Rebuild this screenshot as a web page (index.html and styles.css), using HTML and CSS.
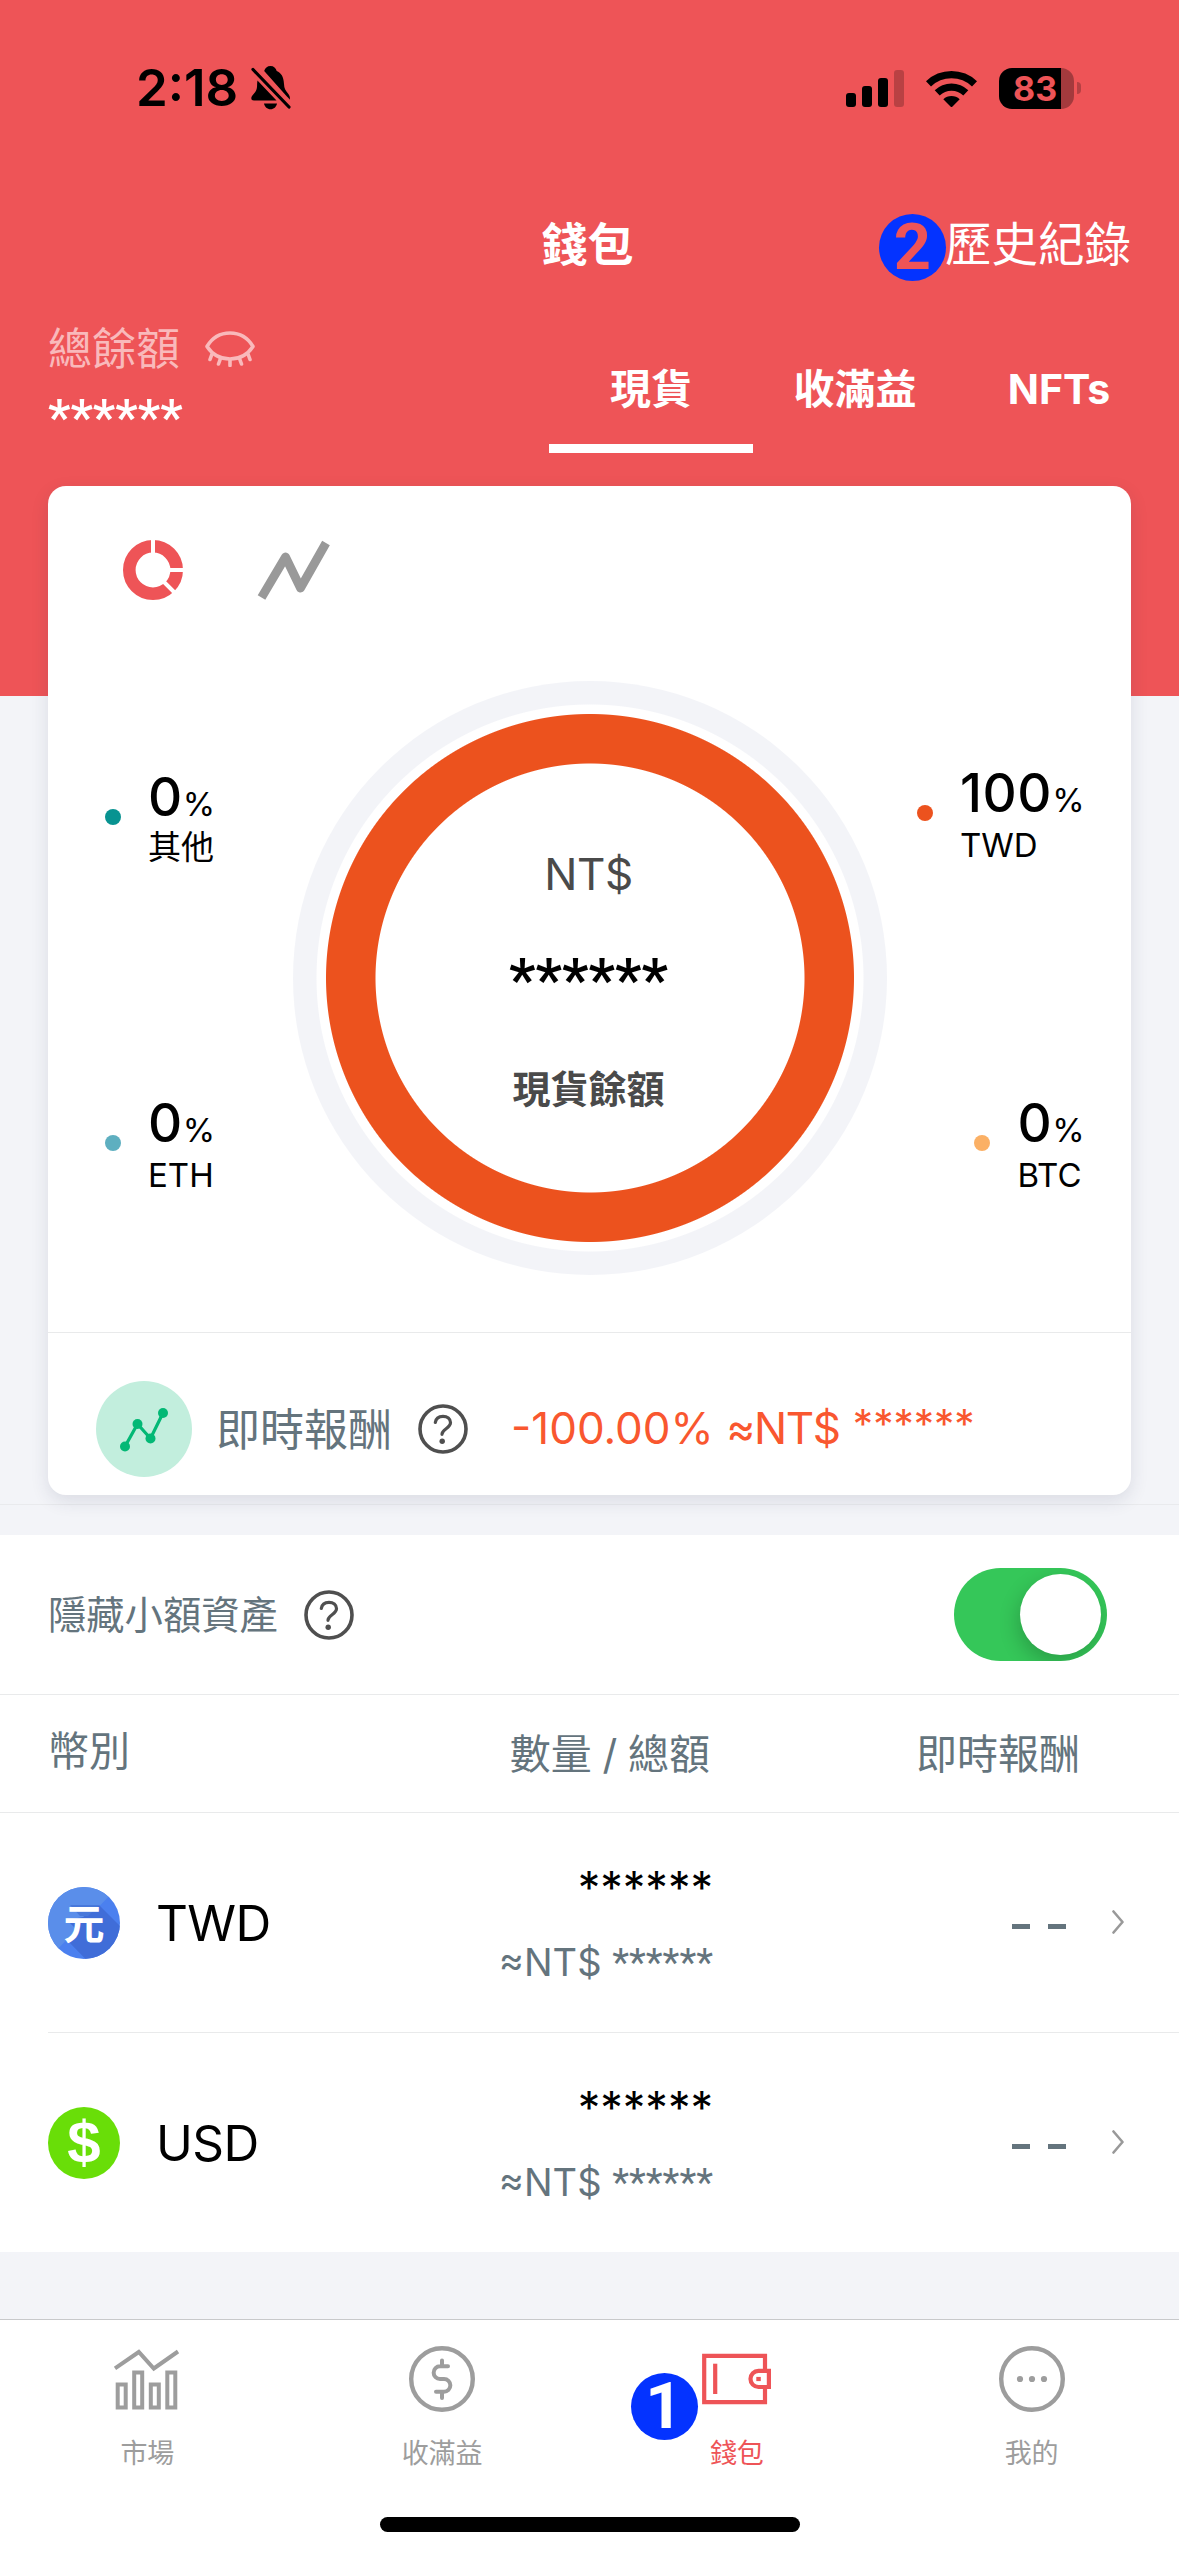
FILE: index.html
```html
<!DOCTYPE html>
<html lang="zh-Hant">
<head>
<meta charset="utf-8">
<title>錢包</title>
<link rel="stylesheet" href="styles.css">
</head>
<body>
<div class="screen">
  <header class="header">
    <div class="status">
      <div class="status-left">
        <span class="time">2:18</span>
        <svg class="bell" width="40" height="44" viewBox="0 0 40 44">
          <path d="M19.500 0c-3.200 0-5.600 2-6.300 5L35 29.500c1.500 1.600 3 3 3.800 4.300.5-2.500-.2-4.300-1.800-6.200-2.600-3.200-3.800-5.200-4-9.600C32.600 10.500 30 6.700 25.700 5 25 2 22.700 0 19.500 0z"/>
          <path d="M6.500 14.500C6 17 6.200 18.300 6 21c-.3 3.500-1.700 5-3.600 7.200C.8 30 .3 31 .3 32.300c0 1.400 1 2.200 2.700 2.200h22.500z"/>
          <path d="M13 37.500h13c-.6 3.400-3.200 5.800-6.500 5.800s-5.900-2.400-6.500-5.800z"/>
          <path d="M2 3.500 38 41" fill="none" stroke="#000" stroke-width="3.200" stroke-linecap="round"/>
        </svg>
      </div>
      <div class="status-right">
        <svg width="58" height="37" viewBox="0 0 58 37">
          <rect x="0" y="23" width="10" height="14" rx="3"/>
          <rect x="16" y="16" width="10" height="21" rx="3"/>
          <rect x="32" y="8" width="10" height="29" rx="3"/>
          <rect x="48" y="0" width="10" height="37" rx="3" opacity=".22"/>
        </svg>
        <svg class="wifi" width="51" height="37" viewBox="0 0 51 37">
          <path d="M0 11.300a36.500 36.500 0 0 1 51 0l-5 5.200a29.300 29.300 0 0 0-41 0z"/>
          <path d="M8.700 20.300a24.200 24.200 0 0 1 33.600 0l-5 5.100a17 17 0 0 0-23.600 0z"/>
          <path d="M17.300 29.200a12 12 0 0 1 16.400 0L25.500 37.500z"/>
        </svg>
        <div class="battery">83</div>
        <span class="battery-cap"></span>
      </div>
    </div>
    <nav class="nav">
      <h1 class="nav-title">錢包</h1>
      <a class="nav-link">歷史紀錄<span class="step step-history">2</span></a>
    </nav>
    <div class="summary">
      <div class="balance">
        <div class="balance-label">總餘額
          <svg class="eye" width="50" height="36" viewBox="0 0 50 36" fill="none" stroke="currentColor" stroke-width="3.600" stroke-linecap="round" stroke-linejoin="round">
            <path d="M2 15.500C7 7 15 2 25 2s18 5 23 13.500C43 23 35 28 25 28S7 23 2 15.500z"/>
            <path d="M7 23l-2 5.500M15.500 27.500l-2 5.500M25 29v5.500M34.500 27.500l2 5.500M43 23l2 5.500"/>
          </svg>
        </div>
        <div class="balance-value">******</div>
      </div>
      <div class="tabs">
        <div class="tab tab-active">現貨</div>
        <div class="tab">收滿益</div>
        <div class="tab">NFTs</div>
      </div>
    </div>
  </header>

  <section class="card">
    <div class="card-tools">
      <svg width="60" height="60" viewBox="0 0 60 60">
        <circle cx="30" cy="30" r="23.700" fill="none" stroke="#ee5457" stroke-width="12.600"/>
        <path d="M30 0v16M44 30h16M40.500 41.500 53 54" stroke="#fff" stroke-width="4"/>
      </svg>
      <svg width="74" height="60" viewBox="0 0 74 60">
        <path d="M4.500 57.500 28.500 17l15 31L69 3" fill="none" stroke="#999" stroke-width="8.800" stroke-linejoin="round"/>
      </svg>
    </div>
    <div class="chart">
      <div class="legend legend-left">
        <div class="legend-item"><i class="dot dot-other"></i><div><div class="pct">0<small>%</small></div><div class="coin-code coin-code-cjk">其他</div></div></div>
        <div class="legend-item"><i class="dot dot-eth"></i><div><div class="pct">0<small>%</small></div><div class="coin-code">ETH</div></div></div>
      </div>
      <div class="donut">
        <div class="donut-unit">NT$</div>
        <div class="donut-value">******</div>
        <div class="donut-label">現貨餘額</div>
      </div>
      <div class="legend legend-right">
        <div class="legend-item"><i class="dot dot-twd"></i><div><div class="pct">100<small>%</small></div><div class="coin-code">TWD</div></div></div>
        <div class="legend-item"><i class="dot dot-btc"></i><div><div class="pct">0<small>%</small></div><div class="coin-code">BTC</div></div></div>
      </div>
    </div>
    <div class="return">
      <svg class="return-icon" width="96" height="96" viewBox="0 0 96 96">
        <circle cx="48" cy="48" r="48" fill="#c2eedd"/>
        <path d="M29 65.500 41.500 43 54.500 57.500 67 32" fill="none" stroke="#03b875" stroke-width="3.200"/>
        <g fill="#03b875"><circle cx="29" cy="65.500" r="5"/><circle cx="41.500" cy="43" r="5"/><circle cx="54.500" cy="57.500" r="5"/><circle cx="67" cy="32" r="5"/></g>
      </svg>
      <span class="return-label">即時報酬</span>
      <svg class="help" width="50" height="50" viewBox="0 0 50 50" fill="none" stroke="#4f4f4f" stroke-linecap="round">
        <circle cx="25" cy="25" r="23" stroke-width="3.600"/>
        <path d="M17.300 18.500c.6-4.200 3.700-6.200 7.700-6.200 4.300 0 7.500 2.400 7.500 6.300 0 6-8.500 6.300-8.500 11.700" stroke-width="3.200"/>
        <circle cx="24.200" cy="37.200" r="2.700" fill="#4f4f4f" stroke="none"/>
      </svg>
      <span class="return-value">-100.00% <span class="return-unit">≈NT$</span> <span class="return-stars">******</span></span>
    </div>
  </section>

  <div class="band"></div>

  <section class="assets">
    <div class="hide-small">
      <span class="hide-label">隱藏小額資產</span>
      <svg class="help" width="50" height="50" viewBox="0 0 50 50" fill="none" stroke="#4f4f4f" stroke-linecap="round">
        <circle cx="25" cy="25" r="23" stroke-width="3.600"/>
        <path d="M17.300 18.500c.6-4.200 3.700-6.200 7.700-6.200 4.300 0 7.500 2.400 7.500 6.300 0 6-8.500 6.300-8.500 11.700" stroke-width="3.200"/>
        <circle cx="24.200" cy="37.200" r="2.700" fill="#4f4f4f" stroke="none"/>
      </svg>
      <span class="toggle"><span class="knob"></span></span>
    </div>
    <div class="columns">
      <span class="col-coin">幣別</span>
      <span class="col-amount">數量 / 總額</span>
      <span class="col-return">即時報酬</span>
    </div>
    <div class="row">
      <svg class="coin" width="72" height="72" viewBox="0 0 72 72">
        <defs><clipPath id="disc"><circle cx="36" cy="36" r="36"/></clipPath></defs>
        <g clip-path="url(#disc)">
          <path fill="#4b80ef" d="M0 0h72v72H0z"/>
          <path fill="#5a8eea" d="M0 0h70L0 72z"/>
          <path fill="#406dd8" d="M51 18 90 57 60 95 19 53 30 44 19 33l16-3z"/>
          <path fill="#4878da" d="M22 18h29L40 29H32z"/>
        </g>
        <text class="yuan" x="36" y="51.500" text-anchor="middle">元</text>
      </svg>
      <span class="name">TWD</span>
      <div class="amounts"><div class="amount">******</div><div class="approx">≈NT$ <span class="approx-stars">******</span></div></div>
      <span class="none"><i></i><i></i></span>
      <svg class="chevron" width="12" height="24" viewBox="0 0 12 24"><path d="M1.500 1.500 10.500 12l-9 10.500" fill="none" stroke="#999" stroke-width="2.600" stroke-linecap="round" stroke-linejoin="round"/></svg>
    </div>
    <div class="row">
      <svg class="coin" width="72" height="72" viewBox="0 0 72 72">
        <circle cx="36" cy="36" r="36" fill="#69de08"/>
        <text class="dollar" x="36" y="56" text-anchor="middle">$</text>
      </svg>
      <span class="name">USD</span>
      <div class="amounts"><div class="amount">******</div><div class="approx">≈NT$ <span class="approx-stars">******</span></div></div>
      <span class="none"><i></i><i></i></span>
      <svg class="chevron" width="12" height="24" viewBox="0 0 12 24"><path d="M1.500 1.500 10.500 12l-9 10.500" fill="none" stroke="#999" stroke-width="2.600" stroke-linecap="round" stroke-linejoin="round"/></svg>
    </div>
  </section>

  <footer class="tabbar">
    <div class="tabbar-items">
      <a class="tabbar-item">
        <svg width="68" height="68" viewBox="0 0 68 68" fill="none" stroke="#9d9d9d" stroke-width="4">
          <path d="M2 23.300 25.800 7l15 16.500L65 6.500"/>
          <path d="M4.700 39.500h8v23h-8zM21.200 27.500h8v35h-8zM37.800 39.500h8v23h-8zM54.300 27.500h8v35h-8z"/>
        </svg>
        <span>市場</span>
      </a>
      <a class="tabbar-item">
        <svg width="68" height="68" viewBox="0 0 68 68" fill="none" stroke="#9d9d9d" stroke-width="4.400" stroke-linecap="round">
          <circle cx="34" cy="34" r="30.800"/>
          <path d="M40 21.300H32a6.300 6.300 0 0 0 0 12.700h4a6.300 6.300 0 0 1 0 12.700h-8M34 15.500v5M34 48v5" stroke-width="4"/>
        </svg>
        <span>收滿益</span>
      </a>
      <a class="tabbar-item tabbar-active">
        <svg width="72" height="68" viewBox="0 0 72 68" fill="none" stroke="#ee5457" stroke-width="4.200">
          <path d="M64 26V10.800H3.200v46.400H64V42"/>
          <path d="M14.200 18.700v30.300"/>
          <path d="M67.900 25.800H57.500a8 8 0 0 0-8 8.100 8 8 0 0 0 8 8.100h10.400z"/>
          <path d="M55.300 34h4.500"/>
        </svg>
        <span>錢包</span>
        <span class="step step-wallet">1</span>
      </a>
      <a class="tabbar-item">
        <svg width="68" height="68" viewBox="0 0 68 68" fill="#9d9d9d">
          <circle cx="34" cy="34" r="30.800" fill="none" stroke="#9d9d9d" stroke-width="4.400"/>
          <circle cx="22" cy="34" r="3.100"/><circle cx="34" cy="34" r="3.100"/><circle cx="46" cy="34" r="3.100"/>
        </svg>
        <span>我的</span>
      </a>
    </div>
    <div class="home"></div>
  </footer>
</div>
</body>
</html>
```
FILE: styles.css
```css
* { box-sizing: border-box; }
body {
  margin: 0;
  font-family: Inter, "Noto Sans CJK TC", sans-serif;
  color: #000;
}
svg { display: block; flex: none; }
i { display: block; }
.screen {
  width: 1179px;
  height: 2556px;
  display: flex;
  flex-direction: column;
  background: #f3f4f8;
  overflow: hidden;
}

/* header */
.header { height: 696px; flex: none; background: #ee5457; color: #fff; }
.status {
  height: 176px;
  padding: 0 98px 0 136px;
  display: flex;
  justify-content: space-between;
  align-items: center;
  color: #000;
}
.status-left { display: flex; align-items: center; gap: 13px; }
.time { font-size: 51px; font-weight: 600; line-height: 62px; width: 102px; letter-spacing: 0; white-space: nowrap; }
.status-right { display: flex; align-items: center; }
.wifi { margin: 0 22px; }
.battery {
  width: 75px;
  height: 41px;
  padding-left: 14px;
  border-radius: 13px;
  background: linear-gradient(90deg, #000 62px, #a43a3d 62px);
  font-size: 34px;
  font-weight: 700;
  line-height: 41px;
  color: #ee5457;
}
.battery-cap { width: 4px; height: 12px; margin-left: 3px; border-radius: 0 6px 6px 0; background: #b54043; }
.nav {
  height: 134px;
  padding: 1px 48px 0;
  display: grid;
  grid-template-columns: 1fr auto 1fr;
  align-items: center;
}
.nav-title { grid-column: 2; margin: 0 4px 0 0; font-size: 46px; font-weight: 700; line-height: 60px; }
.nav-link { grid-column: 3; justify-self: end; position: relative; font-size: 46.500px; line-height: 62px; }
.step {
  position: absolute;
  width: 67px;
  height: 67px;
  border-radius: 50%;
  background: #0433ff;
  font: 700 65px/67px Roboto, sans-serif;
  text-align: center;
}
.step-history { left: -66px; top: 1px; color: #ee5457; }
.summary { height: 176px; padding: 0 18px 0 48px; display: flex; justify-content: space-between; }
.balance { padding-top: 11px; }
.balance-label { display: flex; align-items: center; gap: 25px; font-size: 44px; line-height: 56px; color: #f9b9bb; }
.balance-value { margin-top: 11px; font-family: Roboto, sans-serif; font-size: 50px; font-weight: 600; line-height: 60px; }
.tabs { display: flex; align-self: flex-start; height: 143px; }
.tab {
  width: 204px;
  padding: 46px 0 0;
  border-bottom: 9px solid transparent;
  font-size: 41px;
  font-weight: 700;
  line-height: 66px;
  text-align: center;
}
.tab-active { border-bottom-color: #fff; }

/* overview card */
.card {
  height: 1009px;
  flex: none;
  margin: -210px 48px 0;
  border-radius: 18px;
  background: #fff;
  box-shadow: 0 6px 18px rgba(40, 50, 80, .12);
  position: relative;
}
.card-tools { display: flex; gap: 74px; height: 195px; padding: 54px 75px 0; }
.chart { display: grid; grid-template-columns: 1fr 594px 1fr; height: 594px; }
.legend { display: flex; flex-direction: column; }
.legend-left { padding: 85px 0 0 57px; gap: 222px; }
.legend-right { padding: 81px 47px 0 0; gap: 226px; align-items: flex-end; }
.legend-item { display: flex; gap: 27px; height: 104px; }
.dot { width: 16px; height: 16px; margin-top: 43px; border-radius: 50%; }
.dot-other { background: #089391; }
.dot-eth { background: #5eafc0; }
.dot-twd { background: #ec521e; }
.dot-btc { background: #fbb065; }
.pct { display: flex; font-size: 53px; font-weight: 500; line-height: 62px; letter-spacing: .6px; }
.pct small { font-size: 33px; font-weight: 400; line-height: 76px; height: 62px; letter-spacing: -.6px; }
.coin-code { font-size: 33px; line-height: 42px; }
.coin-code-cjk { line-height: 38px; }
.donut {
  border-radius: 50%;
  background: radial-gradient(circle, #fff 214px, #ec521e 215px, #ec521e 263.500px, #fff 264.500px, #fff 273px, #f3f4f8 274px);
  text-align: center;
}
.donut-unit { margin: 163px 2px 0 0; font-size: 44px; line-height: 60px; color: #4a4a4a; letter-spacing: -.5px; }
.donut-value { margin: 46px 2px 0 0; font-family: Roboto, sans-serif; font-size: 59px; font-weight: 600; line-height: 60px; }
.donut-label { margin: 49px 2px 0 0; font-size: 38px; font-weight: 700; line-height: 60px; color: #4a4a4a; }
.return {
  height: 163px;
  margin-top: 57px;
  padding: 0 48px;
  border-top: 1px solid #e9eaeb;
  display: flex;
  align-items: flex-start;
}
.return-icon { margin-top: 48px; }
.return-label { margin: 67px 26px 0 24px; font-size: 44px; line-height: 60px; color: #64747d; }
.return .help { margin-top: 71px; }
.return-value { margin: 65px 0 0 43px; font-size: 44px; line-height: 60px; color: #f9572f; white-space: nowrap; }
.return-unit { letter-spacing: -1.400px; }
.return-stars { font-size: 40.500px; vertical-align: 5px; line-height: 40px; margin-left: 1px; }
.band { height: 31px; flex: none; margin-top: 9px; border-top: 1px solid #e9eaed; }

/* asset list */
.assets { height: 717px; flex: none; background: #fff; color: #64747d; }
.hide-small { height: 159px; padding: 0 72px 0 48px; display: flex; align-items: center; }
.hide-label { font-size: 38.300px; line-height: 60px; margin-right: 26px; }
.toggle { width: 153px; height: 93px; margin-left: auto; padding: 6px; border-radius: 47px; background: #35c759; overflow: hidden; display: flex; justify-content: flex-end; }
.knob { width: 81px; height: 81px; border-radius: 50%; background: #fff; box-shadow: -2px 8px 20px rgba(0, 0, 0, .2); }
.columns {
  height: 119px;
  border: solid #e9eaeb;
  border-width: 1px 0;
  padding-left: 48px;
  display: grid;
  grid-template-columns: 300px 362px 370px;
  font-size: 41px;
  line-height: 119px;
}
.col-coin { line-height: 112px; }
.col-amount { word-spacing: -.8px; }
.col-amount, .col-return { text-align: right; }
.row { height: 219px; margin-left: 48px; display: flex; align-items: center; }
.row + .row { border-top: 1px solid #e9eaeb; height: 220px; }
.name { width: 200px; margin-left: 36px; font-size: 49.500px; line-height: 60px; color: #000; letter-spacing: -.6px; }
.amounts { width: 357px; text-align: right; }
.amount { padding-top: 4px; font-size: 45px; line-height: 62px; color: #000; }
.approx { margin-top: 13px; font-size: 38px; line-height: 60px; white-space: nowrap; }
.approx-stars { font-family: Roboto, sans-serif; font-size: 39px; }
.none { display: flex; gap: 18px; width: 54px; margin: 7px 0 0 299px; }
.none i { width: 18px; height: 5px; background: #64747d; }
.chevron { margin: 0 0 2px 46px; }
.yuan { font: 700 41px "Noto Sans CJK TC", sans-serif; fill: #fff; }
.dollar { font: 700 60px "Liberation Sans", sans-serif; fill: #fff; }

/* bottom bar */
.tabbar { height: 237px; flex: none; margin-top: 67px; border-top: 1px solid #c8c9cb; background: #fff; }
.tabbar-items { display: grid; grid-template-columns: repeat(4, 1fr); height: 197px; }
.tabbar-item { position: relative; display: flex; flex-direction: column; align-items: center; padding-top: 25px; font-size: 27px; line-height: 42px; color: #9d9d9d; gap: 20px; }
.tabbar-active { color: #ee5457; }
.step-wallet { left: 41px; top: 53px; color: #fff; }
.home { width: 420px; height: 15px; margin: 0 auto; border-radius: 8px; background: #000; }
```
